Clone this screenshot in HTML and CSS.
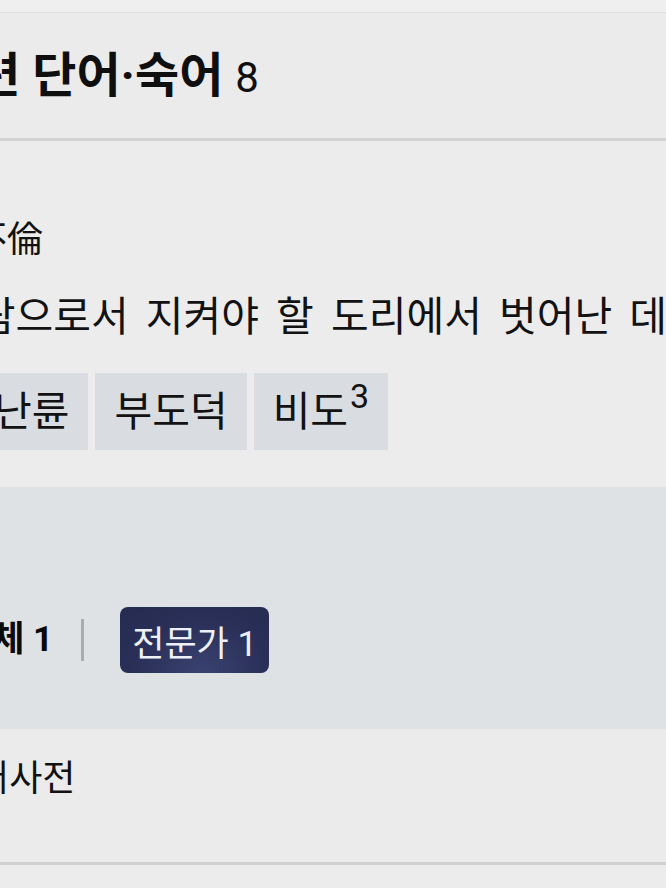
FILE: index.html
```html
<!DOCTYPE html>
<html lang="ko">
<head>
<meta charset="utf-8">
<title>관련 단어·숙어</title>
<link rel="stylesheet" href="styles.css">
</head>
<body>
<div class="page">
  <div class="topband"></div>
  <header class="head">
    <h2 class="title">관련 단어·숙어 <span class="count">8</span></h2>
  </header>
  <section class="entry">
    <div class="hanja">不倫</div>
    <p class="def">사람으로서 지켜야 할 도리에서 벗어난 데가 있음.</p>
    <ul class="tags">
      <li class="tag"><span class="tag-text">난륜</span></li>
      <li class="tag"><span class="tag-text">부도덕</span></li>
      <li class="tag"><span class="tag-text">비도<sup class="sup">3</sup></span></li>
    </ul>
  </section>
  <section class="panel">
    <div class="filters">
      <span class="all">전체 1</span>
      <span class="sep"></span>
      <span class="badge">전문가 1</span>
    </div>
  </section>
  <section class="source">
    <div class="src">국어사전</div>
  </section>
  <div class="bottomband"></div>
</div>
</body>
</html>
```
FILE: styles.css
```css
html, body {
  margin: 0;
  padding: 0;
  background: #ececec;
}
body {
  font-family: Roboto, "Noto Sans CJK KR", sans-serif;
  color: #121212;
}
.page {
  width: 666px;
  height: 888px;
  overflow: hidden;
}
.topband {
  height: 12px;
  background: #efefef;
  border-bottom: 1px solid #e1e1e1;
}
.head {
  height: 125px;
  background: #ebebeb;
  border-bottom: 3px solid #d2d3d5;
  display: flex;
  align-items: center;
}
.title {
  margin: 0 0 0 -68px;
  font-size: 48px;
  font-weight: 700;
  line-height: 1;
  white-space: nowrap;
  color: #0f0f0f;
}
.count {
  font-size: 42px;
  font-weight: 400;
}
.entry {
  background: #ececec;
  padding: 75px 0 37px;
}
.hanja {
  margin-left: -29px;
  font-size: 36px;
  line-height: 48px;
  white-space: nowrap;
}
.def {
  margin: 29px 0 0 -60px;
  font-size: 41px;
  line-height: 48px;
  word-spacing: 7px;
  white-space: nowrap;
}
.tags {
  list-style: none;
  margin: 32px 0 0 -25px;
  padding: 0;
  display: flex;
  gap: 7px;
}
.tag {
  height: 77px;
  padding: 0 19px;
  background: #d9dce0;
  display: flex;
  align-items: center;
  font-size: 41px;
  line-height: 48px;
  white-space: nowrap;
}
.sup {
  font-size: 34px;
  line-height: 0;
  vertical-align: 18px;
  margin-left: 2px;
}
.panel {
  height: 242px;
  background: #dfe2e5;
  box-sizing: border-box;
  padding-top: 120px;
}
.filters {
  display: flex;
  align-items: center;
  margin-left: -40px;
}
.all {
  font-size: 35px;
  font-weight: 700;
  line-height: 44px;
  white-space: nowrap;
  color: #0a0a0a;
}
.sep {
  width: 3px;
  height: 42px;
  margin: 0 36px 0 28px;
  background: #aaacae;
}
.badge {
  height: 66px;
  padding: 0 12px;
  box-sizing: border-box;
  display: flex;
  align-items: center;
  border-radius: 8px;
  background: radial-gradient(ellipse at 55% 100%, #3a4270 0%, #2a3058 55%, #252a4f 100%);
  color: #eef0f7;
  font-size: 35px;
  white-space: nowrap;
}
.source {
  height: 136px;
  background: #ebebeb;
  border-bottom: 3px solid #cfd0d2;
  box-sizing: border-box;
  padding-top: 28px;
}
.src {
  margin-left: -57px;
  font-size: 36px;
  line-height: 44px;
  white-space: nowrap;
}
.bottomband {
  height: 20px;
  background: #ececec;
}
```
